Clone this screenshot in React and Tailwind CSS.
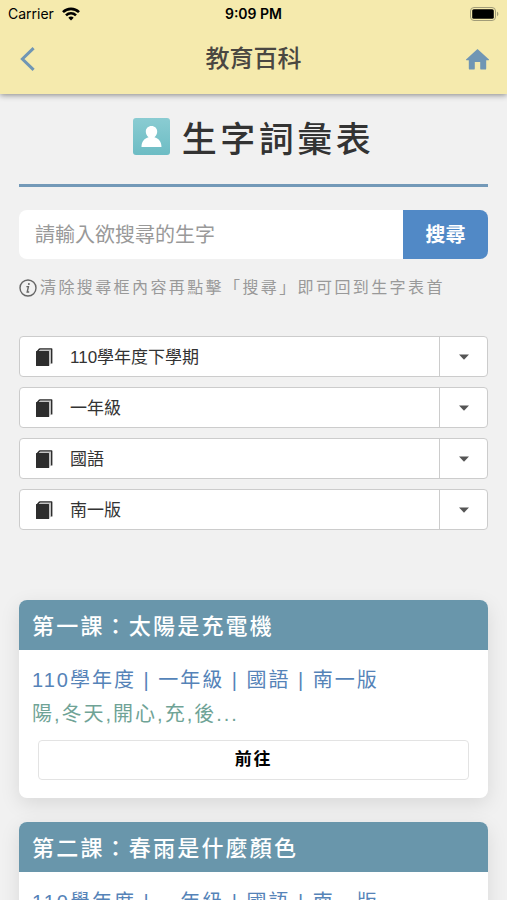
import React from 'react';

const filters = [
  { id: 'semester', label: '學期', options: ['110學年度下學期', '110學年度上學期'] },
  { id: 'grade', label: '年級', options: ['一年級', '二年級', '三年級', '四年級', '五年級', '六年級'] },
  { id: 'subject', label: '科目', options: ['國語'] },
  { id: 'publisher', label: '版本', options: ['南一版', '康軒版', '翰林版'] },
];

const lessons = [
  { title: '第一課：太陽是充電機', meta: '110學年度 | 一年級 | 國語 | 南一版', words: '陽,冬天,開心,充,後...' },
  { title: '第二課：春雨是什麼顏色', meta: '110學年度 | 一年級 | 國語 | 南一版', words: '春,雨,什麼,顏色,快...' },
];

function StatusBar() {
  return (
    <div className="h-7 px-2 grid grid-cols-3 items-center font-['Inter','Liberation_Sans',sans-serif] text-sm text-black">
      <div className="flex items-center gap-2">
        <span>Carrier</span>
        <svg width="18" height="14" viewBox="0 0 18 14" fill="none" stroke="black" strokeWidth="2.6" aria-hidden="true">
          <path d="M1 5.2C5.4 .8 12.6 .8 17 5.2" />
          <path d="M4 8.4C6.8 5.6 11.2 5.6 14 8.4" />
          <path d="M6.3 10.7C7.8 9.2 10.2 9.2 11.7 10.7L9 13.6Z" fill="black" stroke="none" />
        </svg>
      </div>
      <span className="text-center font-semibold">9:09 PM</span>
      <svg className="justify-self-end" width="29" height="14" viewBox="0 0 29 14" aria-hidden="true">
        <rect x=".5" y=".5" width="25" height="13" rx="3.5" fill="none" stroke="#a19c78" />
        <rect x="2.2" y="2.2" width="21.6" height="9.6" rx="1.6" fill="black" />
        <path d="M27 4.8c1.8.5 1.8 3.9 0 4.4Z" fill="#a19c78" />
      </svg>
    </div>
  );
}

function Header() {
  return (
    <header className="sticky top-0 z-10 bg-[#f5eaad] shadow-[0_1px_6px_rgba(0,0,0,0.45)]">
      <StatusBar />
      <nav className="h-[66px] px-[18px] pb-1 flex items-center justify-between text-[#7096b4]">
        <button type="button" aria-label="返回" className="w-6 flex">
          <svg width="18" height="24" viewBox="0 0 18 24" fill="none" stroke="currentColor" strokeWidth="3">
            <path d="M15.6 1.2L4.4 12L15.6 22.8" />
          </svg>
        </button>
        <span className="text-2xl font-medium text-[#4a4742]">教育百科</span>
        <a href="#home" aria-label="首頁" className="w-6 flex justify-end">
          <svg width="23" height="21" viewBox="0 0 23 21" fill="currentColor">
            <path d="M11.5 0L23 10.6Q23.2 11.2 22.6 11.2H20.2V19.4Q20.2 20.6 19 20.6H15.4Q14.2 20.6 14.2 19.4V13H8.8V19.4Q8.8 20.6 7.6 20.6H4Q2.8 20.6 2.8 19.4V11.2H.4Q-.2 11.2 0 10.6Z" />
          </svg>
        </a>
      </nav>
    </header>
  );
}

function SelectBox({ id, label, options }) {
  return (
    <div className="relative h-[41px]">
      <select id={id} aria-label={label} className="w-full h-full appearance-none rounded border border-[#ccc] bg-white pl-[50px] pr-14 pt-0.5 text-[17px] text-[#333]">
        {options.map((option) => (
          <option key={option}>{option}</option>
        ))}
      </select>
      <svg className="absolute left-[17px] top-3 pointer-events-none" width="17" height="18" viewBox="0 0 17 18" fill="#2d2d2d" aria-hidden="true">
        <rect x="0" y="3" width="13.2" height="15" rx=".6" />
        <path d="M0 4L3 .6Q3.4 .2 4 .2H15.6Q16.4 .2 16.4 1V15.4H15V1.7H4.2L2.6 3.6Z" />
        <path d="M2.8 3L4.2 1.7H15V15.4L13.2 17.4V3Z" fill="#c4c4c4" />
      </svg>
      {/* dropdown arrow cell */}
      <span className="absolute inset-y-0 right-0 w-[49px] border-l border-[#ccc] flex items-center justify-center pointer-events-none">
        <svg width="10" height="6" viewBox="0 0 10 6" fill="#555" aria-hidden="true">
          <path d="M0 .4H10L5 5.8Z" />
        </svg>
      </span>
    </div>
  );
}

function LessonCard({ title, meta, words }) {
  return (
    <article className="rounded-lg bg-white overflow-hidden shadow-[0_6px_20px_rgba(0,0,0,0.1)]">
      <h2 className="h-[50px] px-[13px] pt-0.5 flex items-center bg-[#6996ab] text-[22px] font-medium tracking-widest text-white">{title}</h2>
      <div className="px-[13px] pt-[13px] pb-[18px]">
        <p className="text-xl leading-[34px] tracking-widest text-[#5583b8]">{meta}</p>
        <p className="text-xl leading-[34px] tracking-widest text-[#6fa396]">{words}</p>
        <div className="px-1.5 pt-[9px]">
          <button type="button" className="w-full h-10 rounded-sm border border-[#e3e3e3] bg-white text-[17px] font-bold tracking-widest text-black">前往</button>
        </div>
      </div>
    </article>
  );
}

export default function App() {
  return (
    <div className="min-h-screen bg-[#f1f1f1] font-['Liberation_Sans','Noto_Sans_CJK_TC',sans-serif]">
      <Header />
      <main className="px-[19px] pb-6">
        <div className="h-[93px] pt-4 flex items-start justify-center gap-3 border-b-[3px] border-[#7399b8]">
          <svg className="mt-2" width="37" height="37" viewBox="0 0 37 37" aria-hidden="true">
            <defs>
              <linearGradient id="badge" x1="0" y1="0" x2="0" y2="1">
                <stop offset="0" stopColor="#8accd2" />
                <stop offset="1" stopColor="#6dbcc4" />
              </linearGradient>
            </defs>
            <rect width="37" height="37" rx="3" fill="url(#badge)" />
            <path d="M8.5 29C8.5 23 11.5 20.5 15.6 19.2C13.6 17.8 12.8 15.8 12.8 13.6C12.8 10.4 15.2 8 18.5 8S24.2 10.4 24.2 13.6C24.2 15.8 23.4 17.8 21.4 19.2C25.5 20.5 28.5 23 28.5 29Z" fill="white" />
          </svg>
          <h1 className="text-[35px] leading-[60px] font-medium tracking-widest text-[#333]">生字詞彙表</h1>
        </div>

        <form className="mt-[23px] h-[49px] flex rounded-lg overflow-hidden" onSubmit={(e) => e.preventDefault()}>
          <input type="text" aria-label="搜尋生字" placeholder="請輸入欲搜尋的生字" className="flex-1 min-w-0 bg-white px-4 text-xl text-[#333] placeholder:text-[#999]" />
          <button type="submit" className="w-[85px] bg-[#5189c6] text-xl font-bold text-white">搜尋</button>
        </form>

        <p className="mt-[17px] flex items-center gap-[3px] text-base tracking-[0.15em] text-[#999]">
          <svg className="shrink-0" width="18" height="18" viewBox="0 0 18 18" fill="none" stroke="#666" aria-hidden="true">
            <circle cx="9" cy="9" r="8" strokeWidth="1.4" />
            <path d="M7.4 7.6H9.4L8.2 13H10.2" strokeWidth="1.4" />
            <circle cx="9.9" cy="4.9" r="1" fill="#666" stroke="none" />
          </svg>
          <span>清除搜尋框內容再點擊「搜尋」即可回到生字表首</span>
        </p>

        <div className="mt-9 flex flex-col gap-[10px]">
          {filters.map((filter) => (
            <SelectBox key={filter.id} {...filter} />
          ))}
        </div>

        <section className="mt-[70px] flex flex-col gap-6">
          {lessons.map((lesson) => (
            <LessonCard key={lesson.title} {...lesson} />
          ))}
        </section>
      </main>
    </div>
  );
}
